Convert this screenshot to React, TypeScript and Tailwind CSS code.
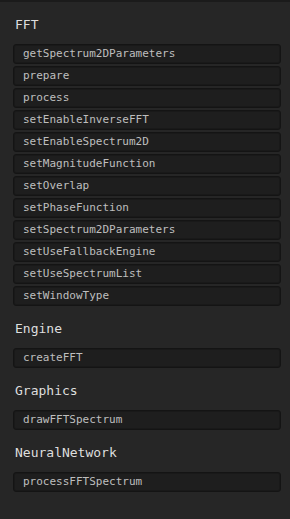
import React from "react";

const sections: { title: string; items: string[] }[] = [
  {
    title: "FFT",
    items: [
      "getSpectrum2DParameters",
      "prepare",
      "process",
      "setEnableInverseFFT",
      "setEnableSpectrum2D",
      "setMagnitudeFunction",
      "setOverlap",
      "setPhaseFunction",
      "setSpectrum2DParameters",
      "setUseFallbackEngine",
      "setUseSpectrumList",
      "setWindowType",
    ],
  },
  { title: "Engine", items: ["createFFT"] },
  { title: "Graphics", items: ["drawFFTSpectrum"] },
  { title: "NeuralNetwork", items: ["processFFTSpectrum"] },
];

export default function App() {
  return (
    <div
      className="w-[290px] h-[519px] bg-[#262626] border-t-2 border-[#1b1b1b] overflow-hidden"
      style={{ fontFamily: '"DejaVu Sans Mono", monospace' }}
    >
      <div className="px-[13px] pt-[14px] flex flex-col">
        {sections.map((s, i) => (
          <div key={s.title} className={i === 0 ? "" : "mt-[14px]"}>
            <div className="pl-[2px] text-[13px] leading-[18px] text-[#dedede] mb-[10px]">
              {s.title}
            </div>
            <div className="flex flex-col gap-[2px]">
              {s.items.map((it) => (
                <div
                  key={it}
                  className="h-[20px] w-[268px] rounded-[3px] border border-[#141414] bg-[#1e1e1e] shadow-[inset_0_0_0_1px_#191919] pl-[9px] flex items-center text-[11px] text-[#bebebe]"
                >
                  {it}
                </div>
              ))}
            </div>
          </div>
        ))}
      </div>
    </div>
  );
}
